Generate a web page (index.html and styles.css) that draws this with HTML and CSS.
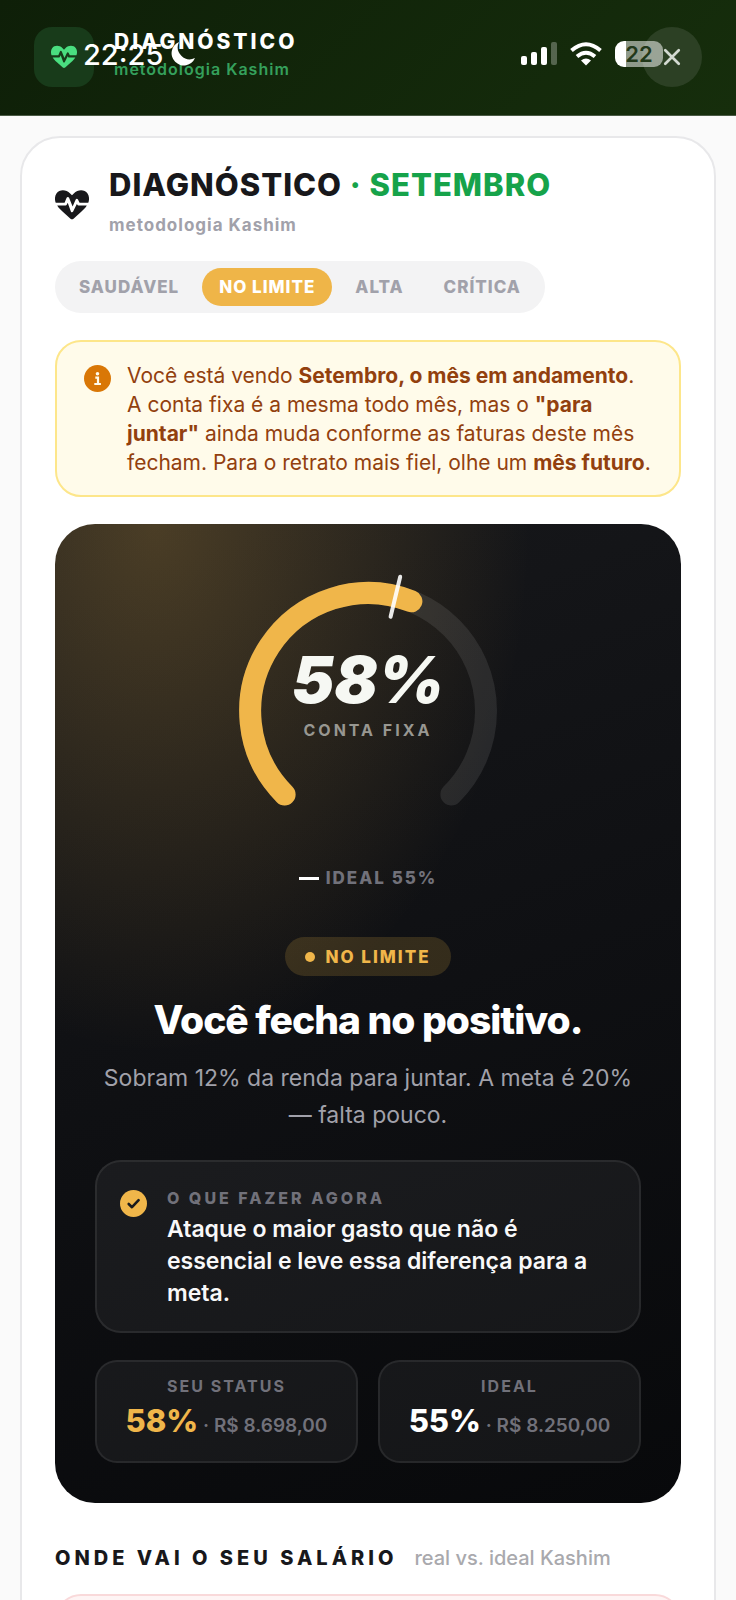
FILE: index.html
```html
<!DOCTYPE html>
<html lang="pt-BR">
<head>
    <meta charset="UTF-8">
    <meta name="viewport" content="width=device-width, initial-scale=1.0">
    <title>Diagnóstico</title>
    <link rel="stylesheet" href="styles.css">
</head>
<body>
    <svg class="defs" aria-hidden="true">
        <symbol id="heart-pulse" viewBox="0 0 512 512">
            <path d="M228 82 256 111 283 82C346 18 444 18 490 82C516 118 519 174 501 222H370L346 174C338 160 318 160 312 175L265 278 212 146C205 130 182 130 175 146L144 222H11C-7 174-4 118 22 82C68 18 166 18 228 82ZM33 264H160C168 264 174 260 177 253L191 222 239 352C246 369 266 370 273 354L329 240 337 254C340 261 346 264 353 264H479C460 298 426 329 395 358L279 462C265 474 247 474 233 462L117 358C86 329 52 298 33 264Z"/>
        </symbol>
    </svg>

    <header class="topbar">
        <span class="topbar-icon"><svg><use href="#heart-pulse"/></svg></span>
        <div class="topbar-text">
            <div class="topbar-title">DIAGNÓSTICO</div>
            <div class="topbar-sub">metodologia Kashim</div>
        </div>
        <button class="close" aria-label="Fechar">
            <svg viewBox="0 0 16 16"><path d="M2 2l12 12M14 2 2 14"/></svg>
        </button>

        <!-- phone status bar, floats over the header -->
        <div class="status">
            <span class="clock">22:25</span>
            <svg class="moon" viewBox="0 0 24 24"><path d="M8 0A12.2 12.2 0 1 0 24 16A12 12 0 0 1 8 0Z"/></svg>
            <svg class="signal" viewBox="0 0 37 24">
                <rect x="0" y="14" width="6" height="9" rx="2"/>
                <rect x="10" y="10" width="6" height="13" rx="2"/>
                <rect x="20" y="5" width="6" height="18" rx="2"/>
                <rect x="30" y="0" width="6" height="23" rx="2" opacity=".28"/>
            </svg>
            <svg class="wifi" viewBox="0 0 32 24">
                <path d="M1.500 8.500Q16-4 30.500 8.500M7 14.500Q16 7 25 14.500"/>
                <path class="wifi-dot" d="M11 18.500Q16 14.500 21 18.500L16 23.500Z"/>
            </svg>
            <span class="battery">22</span>
        </div>
    </header>

    <main class="card">
        <div class="card-head">
            <svg class="card-icon"><use href="#heart-pulse"/></svg>
            <div>
                <h1>DIAGNÓSTICO <span>· SETEMBRO</span></h1>
                <p class="card-sub">metodologia Kashim</p>
            </div>
        </div>

        <div class="tabs">
            <button>SAUDÁVEL</button>
            <button class="active">NO LIMITE</button>
            <button>ALTA</button>
            <button>CRÍTICA</button>
        </div>

        <div class="notice">
            <svg class="badge" viewBox="0 0 27 27">
                <circle cx="13.500" cy="13.500" r="13.500" fill="#d97706"/>
                <circle cx="13.500" cy="8.700" r="1.800" fill="#fffbeb"/>
                <path d="M11.300 12.700h2.700v6.200M10.300 19h6.600" fill="none" stroke="#fffbeb" stroke-width="2.200"/>
            </svg>
            <p>Você está vendo <b>Setembro, o mês em andamento</b>. A conta fixa é a mesma todo mês, mas o <b>"para juntar"</b> ainda muda conforme as faturas deste mês fecham. Para o retrato mais fiel, olhe um <b>mês futuro</b>.</p>
        </div>

        <section class="hero">
            <div class="gauge">
                <svg viewBox="0 0 294 294">
                    <path class="track" d="M63.600 230.400A118 118 0 1 1 230.400 230.400"/>
                    <path class="value" d="M63.600 230.400A118 118 0 0 1 190.400 37.300"/>
                    <path class="mark" d="M169.600 52.700 179.200 12.800"/>
                </svg>
                <div class="gauge-text">
                    <div class="gauge-number">58%</div>
                    <div class="gauge-label">CONTA FIXA</div>
                </div>
            </div>
            <div class="legend"><i></i>IDEAL 55%</div>

            <div class="pill"><i></i>NO LIMITE</div>
            <h2>Você fecha no positivo.</h2>
            <p class="lead">Sobram 12% da renda para juntar. A meta é 20% — falta pouco.</p>

            <div class="action">
                <svg class="badge" viewBox="0 0 27 27">
                    <circle cx="13.500" cy="13.500" r="13.500" fill="#f0b64a"/>
                    <path d="M8.700 14l3.300 3.200 6.600-7" fill="none" stroke="#1a1b1d" stroke-width="2.600" stroke-linecap="round" stroke-linejoin="round"/>
                </svg>
                <div>
                    <div class="action-label">O QUE FAZER AGORA</div>
                    <p>Ataque o maior gasto que não é essencial e leve essa diferença para a meta.</p>
                </div>
            </div>

            <div class="stats">
                <div class="stat">
                    <div class="stat-label">SEU STATUS</div>
                    <div class="stat-value"><b class="amber">58%</b> · R$ 8.698,00</div>
                </div>
                <div class="stat">
                    <div class="stat-label">IDEAL</div>
                    <div class="stat-value"><b>55%</b> · R$ 8.250,00</div>
                </div>
            </div>
        </section>

        <div class="section-head">
            <h3>ONDE VAI O SEU SALÁRIO</h3>
            <span>real vs. ideal Kashim</span>
        </div>
        <div class="row-card"></div>
    </main>
</body>
</html>
```

FILE: styles.css
```css
* { margin: 0; padding: 0; box-sizing: border-box; }
body {
    font-family: Inter, "Liberation Sans", sans-serif;
    background: #fafafa;
    color: #18181b;
    height: 100vh;
    overflow: hidden;
}
button { font: inherit; border: 0; cursor: pointer; }
.defs { display: none; }

/* header */
.topbar {
    position: relative;
    display: flex;
    align-items: center;
    gap: 20px;
    height: 116px;
    padding: 0 34px 2px;
    background: linear-gradient(135deg, #0e1f08, #162e0c);
    border-bottom: 1px solid #4a5a45;
}
.topbar-icon {
    display: flex;
    align-items: center;
    justify-content: center;
    width: 60px;
    height: 60px;
    border-radius: 18px;
    background: #183b1a;
}
.topbar-icon svg { width: 26px; height: 26px; fill: #4ade80; }
.topbar-text { flex: 1; padding-bottom: 3px; }
.topbar-title {
    font-size: 21px;
    line-height: 28px;
    font-weight: 800;
    letter-spacing: 3px;
    color: #fff;
}
.topbar-sub {
    font-size: 16px;
    line-height: 26px;
    font-weight: 600;
    letter-spacing: 1px;
    color: #35a05c;
}
.close {
    display: flex;
    align-items: center;
    justify-content: center;
    width: 60px;
    height: 60px;
    border-radius: 50%;
    background: #2c4024;
}
.close svg { width: 18px; height: 18px; fill: none; stroke: #d3d9d1; stroke-width: 2.4; stroke-linecap: round; }

.status {
    position: absolute;
    inset: 0 73px 0 83px;
    display: flex;
    align-items: center;
    padding-bottom: 7px;
}
.clock { font-size: 29px; font-weight: 500; color: #fff; }
.moon { width: 24px; height: 24px; margin-left: 8px; fill: #fff; }
.signal { width: 37px; height: 24px; margin-left: auto; fill: #fff; }
.wifi { width: 32px; height: 24px; margin: 0 13px 0 12px; fill: none; stroke: #fff; stroke-width: 4; }
.wifi .wifi-dot { fill: #fff; stroke: none; }
.battery {
    width: 48px;
    height: 26px;
    border-radius: 9px;
    background: linear-gradient(90deg, #fff 11px, rgba(255, 255, 255, 0.52) 11px);
    color: #22381a;
    font-size: 22px;
    line-height: 26px;
    font-weight: 600;
    text-align: center;
}

/* main card */
.card {
    margin: 20px 20px 0;
    padding: 29px 33px;
    height: 1600px;
    background: #fff;
    border: 2px solid #e8e8ea;
    border-radius: 40px;
}
.card-head { display: flex; align-items: center; gap: 20px; }
.card-icon { width: 34px; height: 34px; margin-top: 4px; fill: #18181b; }
h1 {
    font-size: 31px;
    line-height: 36px;
    font-weight: 800;
    letter-spacing: 1px;
}
h1 span { color: #16a34a; }
.card-sub {
    margin-top: 8px;
    font-size: 17px;
    line-height: 28px;
    font-weight: 700;
    letter-spacing: 1px;
    color: #a1a1aa;
}

.tabs {
    display: inline-flex;
    gap: 6px;
    margin-top: 22px;
    padding: 7px;
    background: #f3f3f4;
    border-radius: 26px;
}
.tabs button {
    padding: 0 17px;
    height: 38px;
    border-radius: 19px;
    background: none;
    font-size: 17px;
    font-weight: 800;
    letter-spacing: 1px;
    color: #a1a1aa;
}
.tabs .active { background: #efb548; color: #fff; }

.notice {
    display: flex;
    gap: 16px;
    margin-top: 27px;
    padding: 19px 27px 18px;
    background: #fffbea;
    border: 2px solid #fde68a;
    border-radius: 26px;
    color: #92400e;
}
.badge { flex: none; width: 27px; height: 27px; margin-top: 4px; }
.notice p { font-size: 21px; line-height: 29px; }
.notice b { font-weight: 700; }

/* dark panel */
.hero {
    margin-top: 27px;
    padding: 40px;
    text-align: center;
    background:
        radial-gradient(60% 54% at 16% 0, rgba(240, 182, 74, 0.24), rgba(240, 182, 74, 0)),
        linear-gradient(160deg, #17181b, #0f1013 50%, #08090b);
    border-radius: 40px;
    color: #fff;
}
.gauge { display: grid; justify-content: center; }
.gauge svg { grid-area: 1 / 1; width: 294px; height: 294px; fill: none; stroke-width: 22; stroke-linecap: round; }
.track { stroke: rgba(255, 255, 255, 0.09); }
.value { stroke: #f0b64a; }
.mark { stroke: rgba(255, 255, 255, 0.9); stroke-width: 4; }
.gauge-text { grid-area: 1 / 1; padding-top: 84px; }
.gauge-number {
    font-size: 64px;
    line-height: 64px;
    font-weight: 900;
    font-style: italic;
    color: #f6f8f3;
}
.gauge-label {
    margin-top: 6px;
    font-size: 16px;
    line-height: 24px;
    font-weight: 700;
    letter-spacing: 3px;
    color: #989791;
}
.legend {
    display: flex;
    align-items: center;
    justify-content: center;
    gap: 7px;
    margin-top: 8px;
    font-size: 17px;
    line-height: 24px;
    font-weight: 800;
    letter-spacing: 2px;
    color: #71717a;
}
.legend i { width: 20px; height: 3px; background: #fff; }
.pill {
    display: inline-flex;
    align-items: center;
    gap: 10px;
    height: 39px;
    margin-top: 47px;
    padding: 0 20px;
    border-radius: 20px;
    background: rgba(240, 182, 74, 0.17);
    font-size: 17px;
    font-weight: 800;
    letter-spacing: 2px;
    color: #f0b64a;
}
.pill i { width: 10px; height: 10px; border-radius: 50%; background: #f0b64a; }
h2 {
    margin-top: 20px;
    font-size: 39px;
    line-height: 48px;
    font-weight: 800;
    letter-spacing: -1px;
}
.lead {
    margin-top: 16px;
    font-size: 23px;
    line-height: 37px;
    color: #a1a1aa;
}
.action,
.stat {
    background: rgba(255, 255, 255, 0.05);
    border: 2px solid rgba(255, 255, 255, 0.08);
}
.action {
    display: flex;
    gap: 20px;
    margin-top: 26px;
    padding: 24px 23px 22px;
    border-radius: 26px;
    text-align: left;
}
.action-label {
    font-size: 16px;
    line-height: 24px;
    font-weight: 800;
    letter-spacing: 3px;
    color: #71717a;
}
.action p {
    margin-top: 3px;
    font-size: 23px;
    line-height: 32px;
    font-weight: 600;
    color: #f8f8f9;
}
.stats {
    display: grid;
    grid-template-columns: 1fr 1fr;
    gap: 20px;
    margin-top: 27px;
}
.stat { padding: 12px 8px 14px; border-radius: 22px; }
.stat-label {
    font-size: 16px;
    line-height: 24px;
    font-weight: 700;
    letter-spacing: 2px;
    color: #71717a;
}
.stat-value {
    margin-top: 2px;
    font-size: 19px;
    line-height: 42px;
    font-weight: 600;
    color: #71717a;
    white-space: nowrap;
}
.stat-value b { font-size: 31px; font-weight: 800; color: #fff; }
.stat-value .amber { color: #f0b64a; }

.section-head {
    display: flex;
    align-items: baseline;
    gap: 17px;
    margin: 41px 0 22px;
    line-height: 28px;
    font-size: 20px;
    font-weight: 500;
    color: #a9a9ad;
}
h3 { font-size: 20px; font-weight: 800; letter-spacing: 4px; color: #18181b; }
.row-card {
    height: 120px;
    background: #fef4f4;
    border: 2px solid #f9d9da;
    border-radius: 26px;
}
```
